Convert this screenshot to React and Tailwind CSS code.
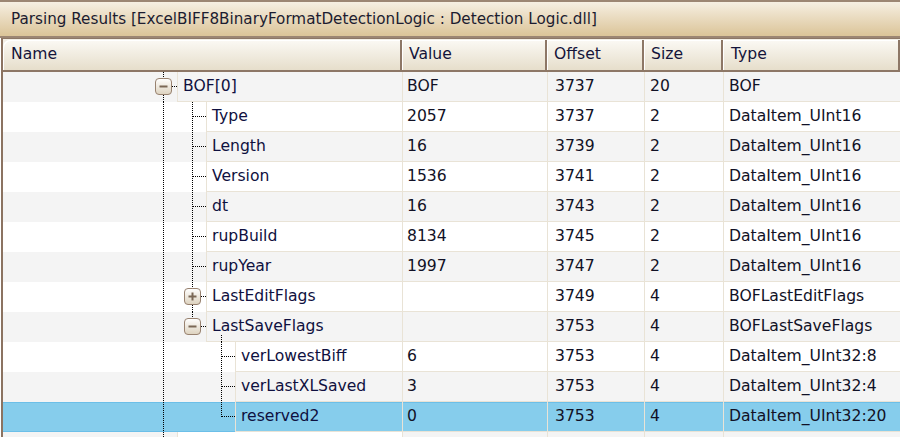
import React from "react";
import clsx from "clsx";

const rows = [
  { name: "BOF[0]", level: 0, exp: "minus", value: "BOF", offset: "3737", size: "20", type: "BOF" },
  { name: "Type", level: 1, value: "2057", offset: "3737", size: "2", type: "DataItem_UInt16" },
  { name: "Length", level: 1, value: "16", offset: "3739", size: "2", type: "DataItem_UInt16" },
  { name: "Version", level: 1, value: "1536", offset: "3741", size: "2", type: "DataItem_UInt16" },
  { name: "dt", level: 1, value: "16", offset: "3743", size: "2", type: "DataItem_UInt16" },
  { name: "rupBuild", level: 1, value: "8134", offset: "3745", size: "2", type: "DataItem_UInt16" },
  { name: "rupYear", level: 1, value: "1997", offset: "3747", size: "2", type: "DataItem_UInt16" },
  { name: "LastEditFlags", level: 1, exp: "plus", value: "", offset: "3749", size: "4", type: "BOFLastEditFlags" },
  { name: "LastSaveFlags", level: 1, exp: "minus", stub: true, last: true, value: "", offset: "3753", size: "4", type: "BOFLastSaveFlags" },
  { name: "verLowestBiff", level: 2, value: "6", offset: "3753", size: "4", type: "DataItem_UInt32:8" },
  { name: "verLastXLSaved", level: 2, value: "3", offset: "3753", size: "4", type: "DataItem_UInt32:4" },
  { name: "reserved2", level: 2, last: true, selected: true, value: "0", offset: "3753", size: "4", type: "DataItem_UInt32:20" },
  // next record, only its top edge is in view
  { name: "", level: 0, hidden: true, value: "", offset: "", size: "", type: "" },
];

const indent = ["w-[174px]", "w-[203px]", "w-[232px]"];
const cols = "grid grid-cols-[399px_145px_97px_79px_1fr]";

// x of the guide line for a level, relative to the name cell
const gx = (l) => 160.5 + 29 * l;

function Expander({ l, kind }) {
  const x = 152.5 + 29 * l;
  return (
    <g>
      <defs>
        <linearGradient id={"eg" + l + kind} x1="0" y1="0" x2="0" y2="1">
          <stop offset="0" stopColor="#ffffff" />
          <stop offset="1" stopColor="#ddd2be" />
        </linearGradient>
      </defs>
      <rect x={x} y="6.5" width="16" height="16" rx="3.5" fill={"url(#eg" + l + kind + ")"} stroke="#988270" />
      <rect x={x + 4} y="13.5" width="8" height="2" fill="#7b6856" />
      {kind === "plus" && <rect x={x + 7} y="10.5" width="2" height="8" fill="#7b6856" />}
    </g>
  );
}

function Tree({ r, guides }) {
  const l = r.level;
  const w = 174 + 29 * l;
  const dot = { stroke: "#000", strokeDasharray: "1 1", strokeWidth: 1, shapeRendering: "crispEdges" };
  return (
    <svg className="absolute left-0 top-0 overflow-visible" width={w} height="30" viewBox={`0 0 ${w} 30`}>
      {guides.map((g) => (
        <line key={g} x1={gx(g)} y1="0" x2={gx(g)} y2="30" {...dot} />
      ))}
      {r.hidden ? (
        <line x1={gx(l)} y1="0" x2={gx(l)} y2="30" {...dot} />
      ) : r.exp ? (
        <>
          <line x1={gx(l)} y1="0" x2={gx(l)} y2="6" {...dot} />
          {!r.last && <line x1={gx(l)} y1="23" x2={gx(l)} y2="30" {...dot} />}
          <line x1={169 + 29 * l} y1="14.5" x2={174 + 29 * l} y2="14.5" {...dot} />
          {r.stub && <line x1={gx(l + 1)} y1="23" x2={gx(l + 1)} y2="30" {...dot} />}
          <Expander l={l} kind={r.exp} />
        </>
      ) : (
        <>
          <line x1={gx(l)} y1="0" x2={gx(l)} y2={r.last ? 15 : 30} {...dot} />
          <line x1={gx(l)} y1="14.5" x2={174 + 29 * l} y2="14.5" {...dot} />
        </>
      )}
    </svg>
  );
}

function Row({ r, i, guides }) {
  const cell = "flex items-center border-b border-l border-[#e9e3d6]";
  return (
    <div
      className={clsx(
        cols,
        "h-[30px]",
        r.selected
          ? "bg-[#86cdec] shadow-[inset_0_1px_0_#6cbfe8,inset_0_-1px_0_#6cbfe8]"
          : i % 2 === 0
          ? "bg-[#f4f4f4]"
          : "bg-white"
      )}
    >
      <div className="flex">
        <div className={clsx("relative shrink-0", indent[r.level])}>
          <Tree r={r} guides={guides} />
        </div>
        <div className={clsx(cell, "flex-1 pl-[5px] text-[#0f1040]", r.hidden && "bg-white")}>{r.name}</div>
      </div>
      <div className={clsx(cell, "pl-[4px]")}>{r.value}</div>
      <div className={clsx(cell, "pl-[7px]")}>{r.offset}</div>
      <div className={clsx(cell, "pl-[5px]")}>{r.size}</div>
      <div className={clsx(cell, "pl-[5px]")}>{r.type}</div>
    </div>
  );
}

const head =
  "flex items-center border-r-2 border-[#8d7766] bg-linear-to-b from-[#fbf9f4] to-[#e6decb] shadow-[inset_1px_1px_0_#ffffff]";

export default function App() {
  // which ancestor levels still have siblings below
  const open = [];
  const withGuides = rows.map((r) => {
    const guides = [];
    for (let k = 0; k < r.level; k++) if (open[k]) guides.push(k);
    open[r.level] = !r.last;
    return { r, guides };
  });

  return (
    <div className="h-[437px] w-[900px] overflow-hidden bg-white font-['DejaVu_Sans',sans-serif] text-[15.6px] text-[#111126]">
      {/* Title */}
      <div className="flex h-[38px] items-center border-y-2 border-[#9c8673] bg-linear-to-b from-[#f6efe2] to-[#dbc498] pl-[11px] text-[15.2px] text-[#1c1c30]">
        Parsing Results [ExcelBIFF8BinaryFormatDetectionLogic : Detection Logic.dll]
      </div>

      <div className="ml-[1px] border-l-2 border-[#8b7361]">
        {/* Header */}
        <div className={clsx(cols, "h-[34px] border-t border-b-2 border-[#8d7766] bg-[#f3efe6] pt-[1px] text-[#14143a]")}>
          <div className={clsx(head, "rounded-tl-[7px] pl-[8px]")}>Name</div>
          <div className={clsx(head, "pl-[7px]")}>Value</div>
          <div className={clsx(head, "pl-[7px]")}>Offset</div>
          <div className={clsx(head, "pl-[7px]")}>Size</div>
          <div className={clsx(head, "border-r-0 pl-[8px]")}>Type</div>
        </div>

        {withGuides.map(({ r, guides }, i) => (
          <Row key={i} r={r} i={i} guides={guides} />
        ))}
      </div>
    </div>
  );
}
